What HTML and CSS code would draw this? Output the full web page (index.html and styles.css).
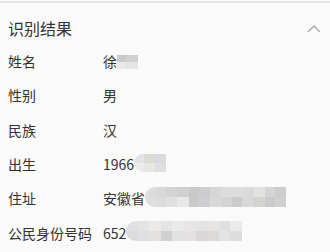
FILE: index.html
```html
<!DOCTYPE html>
<html lang="zh">
<head>
<meta charset="utf-8">
<link rel="stylesheet" href="styles.css">
</head>
<body>
<div class="panel">
  <div class="header">
    <span class="title">识别结果</span>
    <svg class="chev" width="14" height="9" viewBox="0 0 14 9"><path d="M1 8 L7 2 L13 8" fill="none" stroke="#a8a8a8" stroke-width="1.3"/></svg>
  </div>
  <div class="row"><span class="label">姓名</span><span class="value">徐<span class="blur b-name"></span></span></div>
  <div class="row"><span class="label">性别</span><span class="value">男</span></div>
  <div class="row"><span class="label">民族</span><span class="value">汉</span></div>
  <div class="row"><span class="label">出生</span><span class="value">1966<span class="blur b-birth"></span></span></div>
  <div class="row"><span class="label">住址</span><span class="value">安徽省<span class="blur b-addr"></span></span></div>
  <div class="row"><span class="label">公民身份号码</span><span class="value">652<span class="blur b-id"></span></span></div>
</div>
</body>
</html>
```

FILE: styles.css
```css
html, body {
  margin: 0;
  padding: 0;
  background: #fafafa;
}
body {
  font-family: "Noto Sans CJK SC", "Microsoft YaHei", "Liberation Sans", sans-serif;
  color: #333;
}
.panel {
  width: 330px;
  height: 252px;
  overflow: hidden;
  padding-top: 1px;
  background: #fafafa;
  box-sizing: border-box;
}
.panel::before {
  content: "";
  display: block;
  height: 2px;
  background: #e6e6e6;
}
.header {
  display: flex;
  align-items: center;
  justify-content: space-between;
  padding: 13px 9px 4px 8px;
  height: 24px;
}
.title {
  font-size: 16px;
  line-height: 24px;
  color: #333;
}
.chev {
  display: block;
  margin-top: 1px;
}
.row {
  display: flex;
  align-items: center;
  height: 34.3px;
  padding-left: 8px;
  font-size: 14px;
}
.label {
  width: 95px;
  flex: none;
}
.value {
  display: flex;
  align-items: center;
}
.blur {
  display: inline-block;
  background-repeat: no-repeat;
  background-size: 100% 50%;
  background-position: top, bottom;
}
.b-name {
  width: 21px;
  height: 14px;
  margin-top: 1px;
  background-image:
    linear-gradient(90deg, #c9c9c9 0 45%, #d0d0d0 45% 100%),
    linear-gradient(90deg, #e9e9e9 0 45%, #e4e4e4 45% 100%);
}
.b-birth {
  width: 32px;
  height: 18px;
  margin-top: -2px;
  border-radius: 9px 0 0 9px;
  background-image:
    linear-gradient(90deg, #e3e3e3 0 30%, #d9d9d6 30% 65%, #dadadd 65% 100%),
    linear-gradient(90deg, #ebebec 0 30%, #e6e6e4 30% 65%, #dfdfe2 65% 100%);
}
.b-addr {
  width: 141px;
  height: 20px;
  margin-top: -3px;
  border-radius: 10px 0 0 10px;
  background-image:
    linear-gradient(90deg, #dcdcdc 0 8%, #d8d8d8 8% 15%, #d3d3d3 15% 23%, #cfcfcf 23% 31%, #c9c9c9 31% 38%, #cdcdd0 38% 46%, #d6d6d6 46% 54%, #dcdcdc 54% 62%, #dddddd 62% 69%, #dadadc 69% 77%, #e2e2e0 77% 85%, #d4d4d6 85% 92%, #cdcdcd 92% 100%),
    linear-gradient(90deg, #dedede 0 8%, #dcdcdf 8% 15%, #e1dfe2 15% 23%, #e9e7ea 23% 31%, #cbc9c9 31% 38%, #cdcfd2 38% 46%, #d8d8d8 46% 54%, #d4d4d4 54% 62%, #cbcbcd 62% 69%, #d8d8da 69% 77%, #d2d2d0 77% 85%, #cbcbcb 85% 92%, #d0d0d0 92% 100%);
}
.b-id {
  width: 116px;
  height: 20px;
  margin-top: -3px;
  border-radius: 10px 0 0 10px;
  background-image:
    linear-gradient(90deg, #e0e0e2 0 10%, #e3e3e3 10% 20%, #e9e9e7 20% 30%, #e4e4e6 30% 40%, #e8e9e8 40% 50%, #e6e4e4 50% 60%, #e3e3e3 60% 70%, #e5e5e7 70% 80%, #e0e0e0 80% 90%, #eaeaea 90% 100%),
    linear-gradient(90deg, #dcdcde 0 10%, #dfdfe1 10% 20%, #e3e1df 20% 30%, #d0d0d2 30% 40%, #e1e1e1 40% 50%, #e2e0e0 50% 60%, #d8d6d9 60% 70%, #dcdad9 70% 80%, #e4e4e7 80% 90%, #dddddd 90% 100%);
}
```
